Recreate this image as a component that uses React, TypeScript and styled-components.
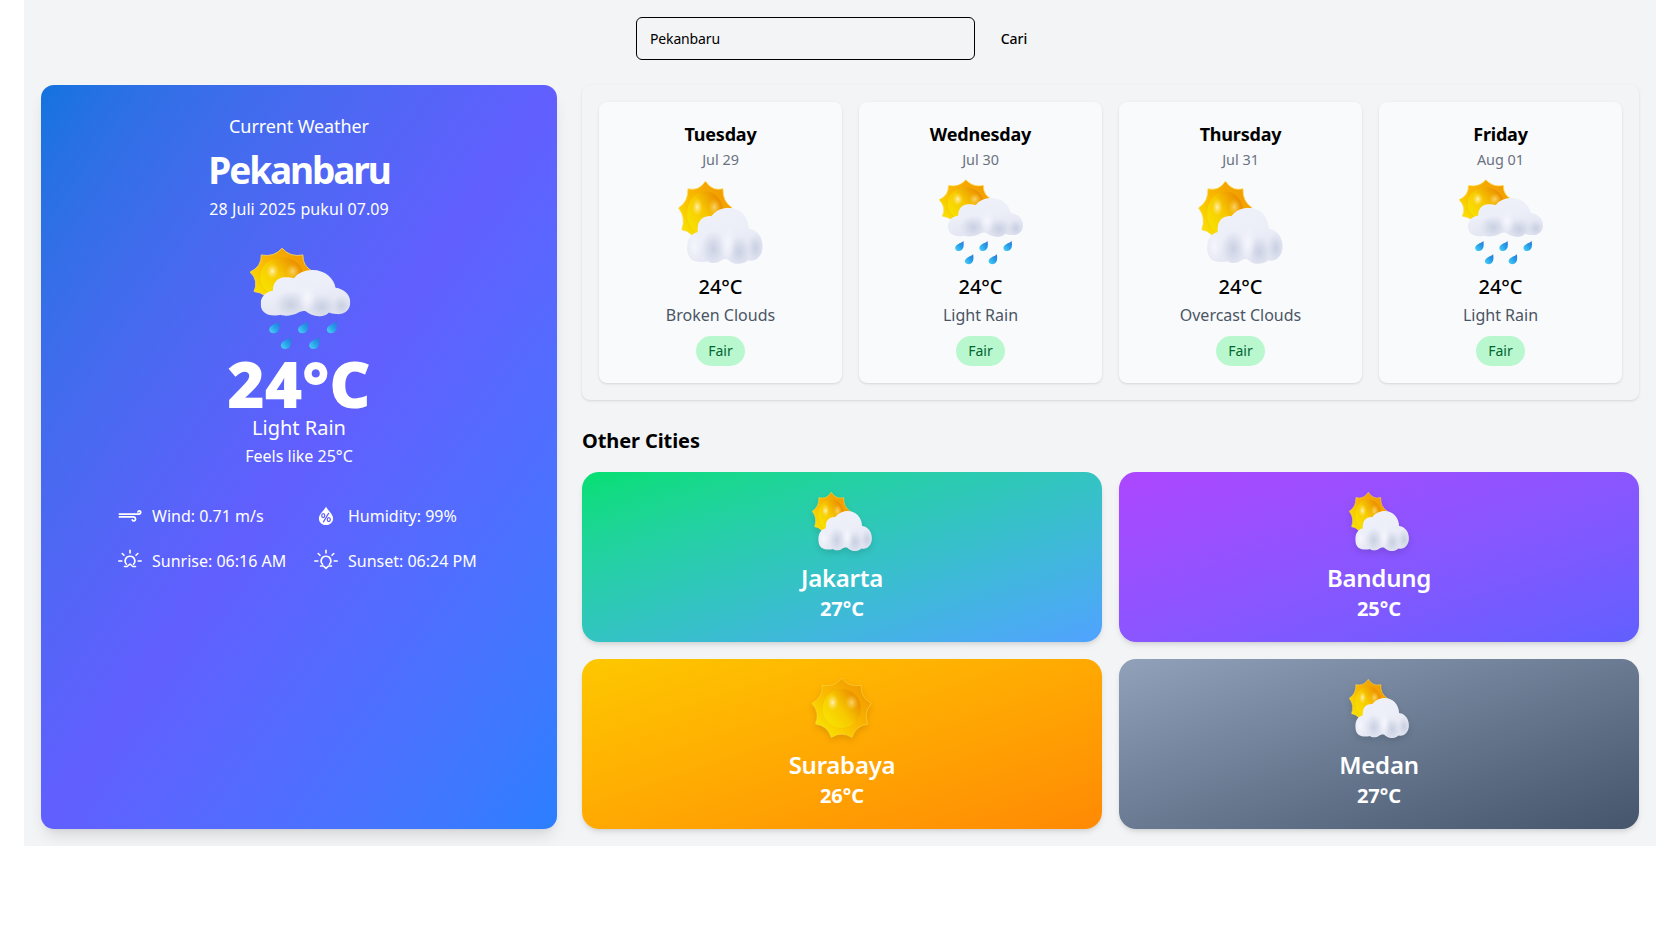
import React from 'react';
import styled, { createGlobalStyle } from 'styled-components';

const GlobalStyle = createGlobalStyle`
  *, *::before, *::after { box-sizing: border-box; margin: 0; padding: 0; }
  body { margin: 0; background: #fff; font-family: 'Open Sans', 'Noto Sans', sans-serif; line-height: 24px; color: #000; }
  button, input { font: inherit; color: inherit; }
`;

const Text = styled.p<{ $size: number; $line: number; $weight?: number; $color?: string; $track?: number; $mt?: number }>`
  font-family: 'Noto Sans', 'Open Sans', sans-serif;
  font-size: ${(p) => p.$size}px;
  line-height: ${(p) => p.$line}px;
  font-weight: ${(p) => p.$weight ?? 400};
  color: ${(p) => p.$color ?? 'inherit'};
  letter-spacing: ${(p) => p.$track ?? 0}px;
  margin-top: ${(p) => p.$mt ?? 0}px;
  white-space: nowrap;
`;

const Page = styled.main`
  width: 1632px;
  height: 846px;
  margin: 0 auto;
  padding: 17px;
  background: #f3f4f6;
`;

const SearchBar = styled.form`
  display: flex;
  justify-content: center;
  height: 43px;
  gap: 9px;
  margin-bottom: 25px;
`;

const SearchInput = styled.input`
  width: 339px;
  height: 43px;
  padding: 0 13px;
  border: 1px solid #000;
  border-radius: 6px;
  background: transparent;
  font-family: 'Noto Sans', sans-serif;
  font-size: 14px;
  letter-spacing: -0.15px;
  outline: none;
`;

const SearchButton = styled.button`
  width: 60px;
  border: 0;
  background: transparent;
  font-family: 'Noto Sans', sans-serif;
  font-size: 14px;
  font-weight: 500;
`;

const Dashboard = styled.div`
  display: grid;
  grid-template-columns: 516px 1fr;
  gap: 25px;
  height: 744px;
`;

const CurrentCard = styled.section`
  display: flex;
  flex-direction: column;
  align-items: center;
  padding-top: 27px;
  border-radius: 13px;
  color: #fff;
  background: linear-gradient(to bottom right in oklab, #1173df, #615fff, #2b7fff);
  box-shadow: 0 10px 15px -3px rgba(0, 0, 0, 0.1), 0 4px 6px -4px rgba(0, 0, 0, 0.1);
`;

const Details = styled.div`
  display: grid;
  grid-template-columns: 196px 170px;
  row-gap: 21px;
  margin-top: 35px;
  padding-left: 4px;
`;

const Detail = styled.div`
  display: flex;
  align-items: center;
  gap: 10px;
  height: 24px;
`;

const Main = styled.div`
  display: flex;
  flex-direction: column;
`;

const Forecast = styled.section`
  display: grid;
  grid-template-columns: repeat(4, 1fr);
  gap: 17px;
  height: 315px;
  padding: 17px;
  border-radius: 8px;
  box-shadow: 0 1px 3px rgba(0, 0, 0, 0.1), 0 1px 2px -1px rgba(0, 0, 0, 0.1);
`;

const DayCard = styled.article`
  display: flex;
  flex-direction: column;
  align-items: center;
  padding-top: 17px;
  border-radius: 8px;
  background: #f9fafb;
  box-shadow: 0 1px 3px rgba(0, 0, 0, 0.1), 0 1px 2px -1px rgba(0, 0, 0, 0.1);
`;

const Badge = styled.span`
  display: flex;
  align-items: center;
  justify-content: center;
  width: 49px;
  height: 30px;
  margin-top: 8px;
  padding-bottom: 2px;
  border-radius: 15px;
  background: #b9f8cf;
  color: #016630;
`;

const Cities = styled.section`
  display: grid;
  grid-template-columns: 1fr 1fr;
  grid-auto-rows: 170px;
  gap: 17px;
  margin-top: 16px;
`;

const CityCard = styled.article<{ $from: string; $to: string }>`
  display: flex;
  flex-direction: column;
  align-items: center;
  padding-top: 18px;
  border-radius: 17px;
  color: #fff;
  background: linear-gradient(to bottom right in oklab, ${(p) => p.$from}, ${(p) => p.$to});
  box-shadow: 0 4px 6px -1px rgba(0, 0, 0, 0.1), 0 2px 4px -2px rgba(0, 0, 0, 0.1);
`;

const Picture = styled.svg<{ $size: number; $mt?: number; $shadow?: boolean }>`
  display: block;
  flex: none;
  width: ${(p) => p.$size}px;
  height: ${(p) => p.$size}px;
  margin-top: ${(p) => p.$mt ?? 0}px;
  filter: ${(p) => (p.$shadow ? 'drop-shadow(0 3px 3px rgba(0, 0, 0, 0.12))' : 'none')};
`;

/* Nine-pointed sun outline with concave edges between the points. */
const sunPath = (cx: number, cy: number, rx: number, ry: number) => {
  const n = 9;
  const at = (i: number, k: number) => {
    const a = (i * 2 * Math.PI) / n - Math.PI / 2;
    return (cx + Math.cos(a) * rx * k).toFixed(2) + ' ' + (cy + Math.sin(a) * ry * k).toFixed(2);
  };
  let d = 'M' + at(0, 1);
  for (let i = 0; i < n; i++) d += ' Q' + at(i + 0.5, 0.72) + ' ' + at(i + 1, 1);
  return d + 'Z';
};

const Defs = ({ id }: { id: string }) => (
  <defs>
    <linearGradient id={id + 'ray'} x1="0.15" y1="0.8" x2="0.8" y2="0.2">
      <stop offset="0" stopColor="#f8de00" />
      <stop offset="0.5" stopColor="#fab800" />
      <stop offset="1" stopColor="#f29e00" />
    </linearGradient>
    <linearGradient id={id + 'ball'} x1="0.15" y1="0.85" x2="0.9" y2="0.3">
      <stop offset="0" stopColor="#f8e000" />
      <stop offset="0.5" stopColor="#f7c900" />
      <stop offset="1" stopColor="#ec9300" />
    </linearGradient>
    <radialGradient id={id + 'glow'}>
      <stop offset="0" stopColor="#fff3c8" stopOpacity="0.95" />
      <stop offset="0.4" stopColor="#ffe88c" stopOpacity="0.6" />
      <stop offset="1" stopColor="#ffdf50" stopOpacity="0" />
    </radialGradient>
    <linearGradient id={id + 'cloud'} x1="0.3" y1="0" x2="0.6" y2="1">
      <stop offset="0" stopColor="#f3f4fc" />
      <stop offset="0.6" stopColor="#eceef8" />
      <stop offset="1" stopColor="#e0e3f0" />
    </linearGradient>
    <radialGradient id={id + 'shade'}>
      <stop offset="0" stopColor="#c0c8dc" stopOpacity="0.75" />
      <stop offset="0.45" stopColor="#c8cfe1" stopOpacity="0.5" />
      <stop offset="1" stopColor="#d3d8e8" stopOpacity="0" />
    </radialGradient>
    <radialGradient id={id + 'light'}>
      <stop offset="0" stopColor="#f5f6fd" />
      <stop offset="1" stopColor="#f1f2fa" stopOpacity="0" />
    </radialGradient>
    <linearGradient id={id + 'drop'} x1="0" y1="1" x2="1" y2="0">
      <stop offset="0" stopColor="#4fd6f8" />
      <stop offset="0.55" stopColor="#259ee9" />
      <stop offset="1" stopColor="#2b72d8" />
    </linearGradient>
  </defs>
);

const SunShape = ({ id, cx, cy, rx, ry, ball = 0.69 }: { id: string; cx: number; cy: number; rx: number; ry: number; ball?: number }) => (
  <g>
    <path d={sunPath(cx, cy, rx, ry)} fill={`url(#${id}ray)`} stroke="#ffd84a" strokeWidth="0.8" strokeLinejoin="round" />
    <ellipse cx={cx} cy={cy} rx={rx * ball} ry={ry * ball} fill={`url(#${id}ball)`} stroke="#f0a800" strokeOpacity="0.35" strokeWidth="0.7" />
    <ellipse cx={cx - rx * 0.3} cy={cy - ry * 0.2} rx={rx * 0.2} ry={ry * 0.28} fill={`url(#${id}glow)`} />
    <ellipse cx={cx + rx * 0.33} cy={cy - ry * 0.2} rx={rx * 0.22} ry={ry * 0.26} fill={`url(#${id}glow)`} opacity="0.6" />
  </g>
);

const PartlyCloudy = ({ id, size, mt, shadow }: { id: string; size: number; mt?: number; shadow?: boolean }) => (
  <Picture $size={size} $mt={mt} $shadow={shadow} viewBox="0 0 100 100">
    <Defs id={id} />
    <SunShape id={id} cx={33.8} cy={38.2} rx={29.3} ry={34.8} />
    <clipPath id={id + 'clip'}>
      <path d="M27 90C18 90 14 83 14 75C14 66 18 60 25.5 58C24.5 47 30 40.5 40 41C46 34 53 32 59 32C71 32 80 42 80.5 54.5C91 56 95.2 65 95.2 73C95.2 84 88 90.5 79.5 88.5C76 91.5 72 92.5 67.5 92.3C63.5 92 60.5 90 57.5 87.3C54 86.5 52 88 50 89C46 92.3 39 92 36 89.5C33 90.5 30 90.5 27 90Z" />
    </clipPath>
    <g clipPath={`url(#${id}clip)`}>
      <rect width="100" height="100" fill={`url(#${id}cloud)`} />
      <ellipse cx="42" cy="76" rx="13" ry="20" fill={`url(#${id}shade)`} />
      <ellipse cx="70" cy="79" rx="13" ry="17" fill={`url(#${id}shade)`} />
      <ellipse cx="88" cy="75" rx="10" ry="16" fill={`url(#${id}shade)`} />
      <ellipse cx="58" cy="70" rx="8" ry="20" fill={`url(#${id}light)`} />
      <ellipse cx="22" cy="74" rx="8" ry="16" fill={`url(#${id}light)`} />
    </g>
  </Picture>
);

const DROPS: [number, number][] = [[27.2, 73.6], [53.2, 73.6], [79.1, 73.6], [37.7, 87.8], [63.2, 87.8]];

const SunRain = ({ id, size, mt }: { id: string; size: number; mt?: number }) => (
  <Picture $size={size} $mt={mt} viewBox="0 0 100 100">
    <Defs id={id} />
    <SunShape id={id} cx={34.3} cy={28} rx={29.2} ry={26} />
    <clipPath id={id + 'clip'}>
      <path d="M29 62.5C20 63 15 59 15 52C15 46 19.5 41 26 40.3C26 32 31.5 27.5 38 28.2C41 28.2 43 28.5 45 29C49 24 55 21.6 61.5 21.6C73 21.6 81 29 82.5 37.5C90 38.5 95.7 43.5 95.7 50.5C95.7 58 90 62 84 61.3C81 61.5 78.5 60.8 76.5 60C74 62.5 71 63.5 67.5 63.3C63 63 58.5 61.5 56 59C53 58 51 59 49 60C44 63 36 63.5 33 62C32 62.3 30 62.5 29 62.5Z" />
    </clipPath>
    <g clipPath={`url(#${id}clip)`}>
      <rect width="100" height="66" fill={`url(#${id}cloud)`} />
      <ellipse cx="42" cy="53" rx="15" ry="13" fill={`url(#${id}shade)`} />
      <ellipse cx="70" cy="55" rx="14" ry="12" fill={`url(#${id}shade)`} />
      <ellipse cx="88" cy="54" rx="9" ry="10" fill={`url(#${id}shade)`} />
      <ellipse cx="57" cy="46" rx="8" ry="13" fill={`url(#${id}light)`} />
    </g>
    {DROPS.map(([x, y]) => (
      <path key={x} transform={`translate(${x - 4.2} ${y - 5.8})`} d="M8.6 0C9 3 9.2 5.4 8.3 7.6C7 11 2.8 11.6 0.8 9.8C-1.3 7.6 0 4.9 2.8 3.4C5 2.1 7 1.6 8.6 0Z" fill={`url(#${id}drop)`} />
    ))}
  </Picture>
);

const Sunny = ({ id, size, mt }: { id: string; size: number; mt?: number }) => (
  <Picture $size={size} $mt={mt} $shadow viewBox="0 0 100 100">
    <Defs id={id} />
    <SunShape id={id} cx={49.5} cy={48} rx={45.8} ry={46.5} ball={0.64} />
  </Picture>
);

const LineIcon = styled.svg`
  display: block;
  flex: none;
  width: 24px;
  height: 24px;
  fill: none;
  stroke: currentColor;
  stroke-width: 1.6;
  stroke-linecap: round;
  stroke-linejoin: round;
`;

const WindIcon = () => (
  <LineIcon viewBox="0 0 24 24">
    <path d="M1.4 10.1H20C23.5 10.1 23.3 6.9 21.4 6.9C20.5 6.9 20 7.3 19.9 8M1.4 12.9H15.2C18.2 12.9 18 17 15.9 17C15 17 14.5 16.6 14.3 15.9" strokeWidth="1.7" />
  </LineIcon>
);

const HumidityIcon = () => (
  <LineIcon viewBox="0 0 24 24">
    <path d="M12 2.8C10 6.6 4.9 10.2 4.9 14.4C4.9 18.4 8.2 21 12 21S19.1 18.4 19.1 14.4C19.1 10.2 14 6.6 12 2.8Z" fill="currentColor" stroke="none" />
    <g stroke="#615fff" strokeWidth="1.25">
      <ellipse cx="9.2" cy="11.6" rx="1.5" ry="1.9" />
      <ellipse cx="14.8" cy="15.6" rx="1.5" ry="1.9" />
      <path d="M14.6 9.4L9.4 17.8" />
    </g>
  </LineIcon>
);

const RAYS = 'M12 1.2V4M4.2 4.5L6 6.3M19.8 4.5L18 6.3M.8 12H3.8M20.2 12H23.2';

const SunriseIcon = () => (
  <LineIcon viewBox="0 0 24 24">
    <path d={RAYS} />
    <path d="M8.5 15.2C5.6 12.2 7.6 7.3 12 7.3S18.4 12.2 15.5 15.2" />
    <path d="M6.5 17.5H9.2L12 15L14.8 17.5H17.5" />
  </LineIcon>
);

const SunsetIcon = () => (
  <LineIcon viewBox="0 0 24 24">
    <path d={RAYS} />
    <path d="M8.5 15.2C5.6 12.2 7.6 7.3 12 7.3S18.4 12.2 15.5 15.2" />
    <path d="M6.5 17H9.5L12 19.4L14.5 17H17.5" />
  </LineIcon>
);

const DAYS = [
  { name: 'Tuesday', date: 'Jul 29', text: 'Broken Clouds', rain: false },
  { name: 'Wednesday', date: 'Jul 30', text: 'Light Rain', rain: true },
  { name: 'Thursday', date: 'Jul 31', text: 'Overcast Clouds', rain: false },
  { name: 'Friday', date: 'Aug 01', text: 'Light Rain', rain: true },
];

const CITIES = [
  { name: 'Jakarta', temp: 27, from: '#05df72', to: '#51a2ff', sunny: false },
  { name: 'Bandung', temp: 25, from: '#ad46ff', to: '#615fff', sunny: false },
  { name: 'Surabaya', temp: 26, from: '#fdc700', to: '#ff8904', sunny: true },
  { name: 'Medan', temp: 27, from: '#90a1b9', to: '#45556c', sunny: false },
];

export default function App() {
  return (
    <>
      <GlobalStyle />
      <Page>
        <SearchBar>
          <SearchInput defaultValue="Pekanbaru" />
          <SearchButton type="button">Cari</SearchButton>
        </SearchBar>
        <Dashboard>
          <CurrentCard>
            <Text $size={18} $line={29} $track={-0.1}>Current Weather</Text>
            <Text as="h1" $size={37} $line={42} $weight={700} $track={-2.1} $mt={8}>Pekanbaru</Text>
            <Text $size={16} $line={26} $mt={5} $track={0.1}>28 Juli 2025 pukul 07.09</Text>
            <SunRain id="now" size={111} mt={24} />
            <Text $size={64} $line={59} $weight={900} $mt={-3}>24°C</Text>
            <Text $size={20} $line={30}>Light Rain</Text>
            <Text $size={16} $line={26}>Feels like 25°C</Text>
            <Details>
              <Detail><WindIcon /><Text as="span" $size={16} $line={24}>Wind: 0.71 m/s</Text></Detail>
              <Detail><HumidityIcon /><Text as="span" $size={16} $line={24}>Humidity: 99%</Text></Detail>
              <Detail><SunriseIcon /><Text as="span" $size={16} $line={24}>Sunrise: 06:16 AM</Text></Detail>
              <Detail><SunsetIcon /><Text as="span" $size={16} $line={24}>Sunset: 06:24 PM</Text></Detail>
            </Details>
          </CurrentCard>
          <Main>
            <Forecast>
              {DAYS.map((d) => (
                <DayCard key={d.name}>
                  <Text as="h3" $size={18} $line={30} $weight={700} $track={-0.2}>{d.name}</Text>
                  <Text $size={14.4} $line={21} $color="#6a7282">{d.date}</Text>
                  {d.rain ? <SunRain id={d.name} size={93} mt={8} /> : <PartlyCloudy id={d.name} size={93} mt={8} />}
                  <Text $size={20} $line={30} $weight={500} $mt={1}>24°C</Text>
                  <Text $size={16} $line={26} $color="#4a5565">{d.text}</Text>
                  <Badge><Text as="span" $size={14} $line={21}>Fair</Text></Badge>
                </DayCard>
              ))}
            </Forecast>
            <Text as="h2" $size={20} $line={30} $weight={700} $track={-0.1} $mt={26}>Other Cities</Text>
            <Cities>
              {CITIES.map((c) => (
                <CityCard key={c.name} $from={c.from} $to={c.to}>
                  {c.sunny ? <Sunny id={c.name} size={66} /> : <PartlyCloudy id={c.name} size={66} shadow />}
                  <Text as="h3" $size={24} $line={34} $weight={600} $track={-0.25} $mt={5}>{c.name}</Text>
                  <Text $size={20} $line={28} $weight={700}>{c.temp}°C</Text>
                </CityCard>
              ))}
            </Cities>
          </Main>
        </Dashboard>
      </Page>
    </>
  );
}
